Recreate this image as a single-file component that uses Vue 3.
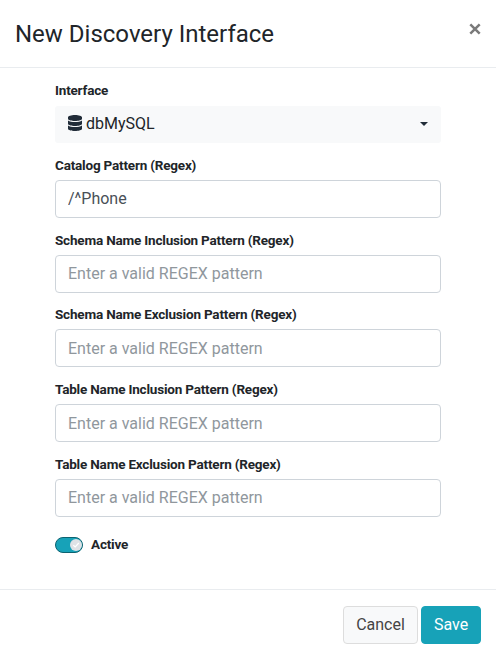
<script setup>
import { ref } from 'vue'

const catalog = ref('/^Phone')
const active = ref(true)
const patterns = [
  'Schema Name Inclusion Pattern (Regex)',
  'Schema Name Exclusion Pattern (Regex)',
  'Table Name Inclusion Pattern (Regex)',
  'Table Name Exclusion Pattern (Regex)',
]
</script>

<template>
  <div class="modal">
    <header class="head">
      <h1>New Discovery Interface</h1>
      <button class="close" aria-label="Close">
        <svg viewBox="0 0 12 12"><path d="M1.3 1.3 10.7 10.7M10.7 1.3 1.3 10.7" /></svg>
      </button>
    </header>
    <main class="body">
      <div class="group">
        <label class="interface-label">Interface</label>
        <button class="select">
          <svg class="db" viewBox="0 0 448 512"><path d="M448 73.143v45.714C448 159.143 347.667 192 224 192S0 159.143 0 118.857V73.143C0 32.857 100.333 0 224 0s224 32.857 224 73.143zM448 176v102.857C448 319.143 347.667 352 224 352S0 319.143 0 278.857V176c48.125 33.143 136.208 48.572 224 48.572S399.874 209.143 448 176zm0 160v102.857C448 479.143 347.667 512 224 512S0 479.143 0 438.857V336c48.125 33.143 136.208 48.572 224 48.572S399.874 369.143 448 336z" /></svg>
          <span>dbMySQL</span>
          <i class="caret"></i>
        </button>
      </div>
      <div class="group">
        <label>Catalog Pattern (Regex)</label>
        <input v-model="catalog" type="text" />
      </div>
      <div v-for="p in patterns" :key="p" class="group">
        <label>{{ p }}</label>
        <input type="text" placeholder="Enter a valid REGEX pattern" />
      </div>
      <div class="toggle" @click="active = !active">
        <span class="switch" :class="{ on: active }">
          <i><svg viewBox="0 0 12 12"><path d="M3.3 6.2 5.2 8 8.8 4" /></svg></i>
        </span>
        <span class="toggle-label">Active</span>
      </div>
    </main>
    <footer class="foot">
      <button class="btn cancel">Cancel</button>
      <button class="btn save">Save</button>
    </footer>
  </div>
</template>

<style>
body { margin: 0; background: #fff; overflow: hidden; }
</style>

<style scoped>
* { box-sizing: border-box; }
.modal { width: 496px; height: 656px; display: flex; flex-direction: column; font-family: Roboto, sans-serif; font-size: 16px; color: #212529; background: #fff; }
button, input { font-family: inherit; font-size: 16px; }
.head { height: 68px; flex: none; border-bottom: 1px solid #e9ecef; display: flex; justify-content: space-between; padding: 16px 15px 0 15px; }
h1 { margin: 0; font-size: 24px; line-height: 36px; font-weight: 400; }
.close { display: flex; align-items: center; border: 0; background: none; padding: 0; height: 25px; }
.close svg { width: 12px; height: 12px; fill: none; stroke: #7a7a7a; stroke-width: 2.5; }
.body { height: 522px; flex: none; padding: 12px 55px 0 55px; border-bottom: 1px solid #e9ecef; }
.group { height: 74.8px; }
label { display: block; height: 25px; line-height: 21px; font-size: 13.5px; font-weight: 700; letter-spacing: -0.19px; }
.interface-label { height: 26px; }
.select, input { display: flex; align-items: center; width: 386px; height: 38px; border-radius: 4px; padding: 0 12px; color: #212529; }
.select { height: 37px; border: 0; background: #f8f9fa; padding: 0 13px 2px; border-radius: 3px; }
.db { width: 14px; height: 16px; margin: 0 4px 2px 0; fill: #212c38; }
.caret { margin-left: auto; border: 4px solid transparent; border-top-color: #212c38; border-bottom: 0; }
input { border: 1px solid #ced4da; background: #fff; color: #495057; outline: 0; }
input::placeholder { color: #90979d; opacity: 1; }
.toggle { display: flex; align-items: center; height: 32px; }
.switch { width: 28px; height: 16px; border-radius: 8px; border: 1px solid #adb5bd; display: flex; align-items: center; padding: 0 1px; }
.switch.on { background: #17a2b8; border-color: #0d6270; justify-content: flex-end; padding-right: 0; }
.switch i { display: flex; width: 12px; height: 12px; border-radius: 50%; background: #dee2e6; }
.switch svg { width: 12px; height: 12px; fill: none; stroke: #fff; stroke-width: 1.2; }
.toggle-label { margin-left: 8px; padding-bottom: 2px; font-size: 13.5px; font-weight: 700; letter-spacing: -0.19px; }
.foot { display: flex; justify-content: flex-end; gap: 3px; padding: 16px 15px 0 0; }
.btn { height: 38px; border-radius: 4px; padding: 0 0 2px; border: 1px solid; }
.cancel { width: 75px; background: #f8f9fa; border-color: #ddd; color: #444; }
.save { width: 60px; background: #17a2b8; border-color: #17a2b8; color: #fff; }
</style>
